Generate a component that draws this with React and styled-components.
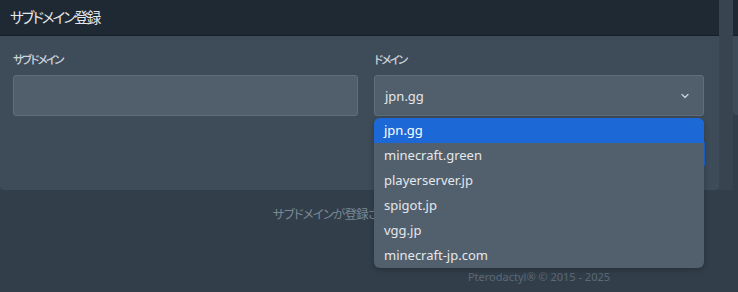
import React from "react";
import styled, { createGlobalStyle } from "styled-components";
import { ChevronDown } from "lucide-react";

const GlobalStyle = createGlobalStyle`
  html, body {
    margin: 0;
    padding: 0;
    background: #323f4b;
    font-family: "Noto Sans", "Noto Sans CJK JP", sans-serif;
    font-feature-settings: "palt";
  }
  * { box-sizing: border-box; }
`;

const Page = styled.div`
  width: 738px;
  height: 292px;
  overflow: hidden;
  display: flex;
  flex-direction: column;
`;

const TopRow = styled.div`
  display: flex;
  height: 190px;
`;

const Card = styled.div`
  width: 719px;
  display: flex;
  flex-direction: column;
  background: #3e4c59;
  border-radius: 0 0 4px 4px;
`;

const Header = styled.div`
  height: 36px;
  background: #1f2933;
  border-bottom: 1px solid #161e26;
  color: #e4e7eb;
  font-size: 14.5px;
  letter-spacing: -2px;
  display: flex;
  align-items: center;
  padding: 0 10px 2px;
`;

const Body = styled.div`
  flex: 1;
  padding: 17px 14px 22px 13px;
  display: flex;
  flex-direction: column;
`;

const Fields = styled.div`
  display: grid;
  grid-template-columns: 345px 330px;
  column-gap: 16px;
`;

const Field = styled.div`
  position: relative;
  display: flex;
  flex-direction: column;
`;

const Label = styled.label`
  font-size: 11.5px;
  font-weight: 500;
  letter-spacing: -1.8px;
  color: #cbd2d9;
  height: 14px;
  line-height: 14px;
  margin-bottom: 8px;
`;

const Input = styled.div`
  height: 41px;
  background: #515f6c;
  border: 1px solid #606d7a;
  border-radius: 3px;
`;

const Select = styled(Input)`
  display: flex;
  align-items: center;
  justify-content: space-between;
  padding: 0 12px 0 10px;
  color: #e4e7eb;
  font-size: 13px;
`;

const Menu = styled.ul`
  position: absolute;
  top: 65px;
  left: 0;
  width: 330px;
  margin: 0;
  padding: 0;
  list-style: none;
  background: #52606d;
  border-radius: 6px;
  overflow: hidden;
  box-shadow: 0 2px 6px rgba(0, 0, 0, 0.25);
  z-index: 2;
`;

const Option = styled.li`
  height: 25px;
  line-height: 25px;
  padding-left: 10px;
  font-size: 13px;
  color: ${(p) => (p.$active ? "#ffffff" : "#e4e7eb")};
  background: ${(p) => (p.$active ? "#1c68d6" : "transparent")};
`;

const Actions = styled.div`
  margin-top: 24px;
  display: flex;
  justify-content: flex-end;
`;

const Button = styled.button`
  height: 28px;
  width: 90px;
  border: none;
  border-radius: 4px;
  background: #1c68d6;
  color: #fff;
  font-family: inherit;
  font-size: 12px;
`;

const Strip = styled.div`
  width: 14px;
  background: #38444f;
`;

const SideCard = styled.div`
  flex: 1;
  height: 115px;
  background: #3e4c59;
  border-radius: 0 0 0 4px;
  display: flex;
  flex-direction: column;
`;

const SideHeader = styled.div`
  height: 36px;
  background: #1f2933;
  border-bottom: 1px solid #161e26;
`;

const Empty = styled.p`
  margin: 14px 0 0;
  padding-left: 8px;
  text-align: center;
  font-size: 12.5px;
  letter-spacing: -0.9px;
  color: #7b8794;
`;

const Footer = styled.p`
  margin: 46px 0 0;
  padding-left: 340px;
  text-align: center;
  font-size: 11px;
  color: #5c6976;
`;

const domains = [
  "jpn.gg",
  "minecraft.green",
  "playerserver.jp",
  "spigot.jp",
  "vgg.jp",
  "minecraft-jp.com",
];

export default function App() {
  return (
    <>
      <GlobalStyle />
      <Page>
        <TopRow>
          <Card>
            <Header>サブドメイン登録</Header>
            <Body>
              <Fields>
                <Field>
                  <Label>サブドメイン</Label>
                  <Input />
                </Field>
                <Field>
                  <Label>ドメイン</Label>
                  <Select>
                    <span>jpn.gg</span>
                    <ChevronDown size={12} strokeWidth={2.5} color="#cbd2d9" />
                  </Select>
                  <Menu>
                    {domains.map((d, i) => (
                      <Option key={d} $active={i === 0}>
                        {d}
                      </Option>
                    ))}
                  </Menu>
                </Field>
              </Fields>
              <Actions>
                <Button>登録</Button>
              </Actions>
            </Body>
          </Card>
          <Strip />
          <SideCard>
            <SideHeader />
          </SideCard>
        </TopRow>
        <Empty>サブドメインが登録されていないようです</Empty>
        <Footer>Pterodactyl® © 2015 - 2025</Footer>
      </Page>
    </>
  );
}
